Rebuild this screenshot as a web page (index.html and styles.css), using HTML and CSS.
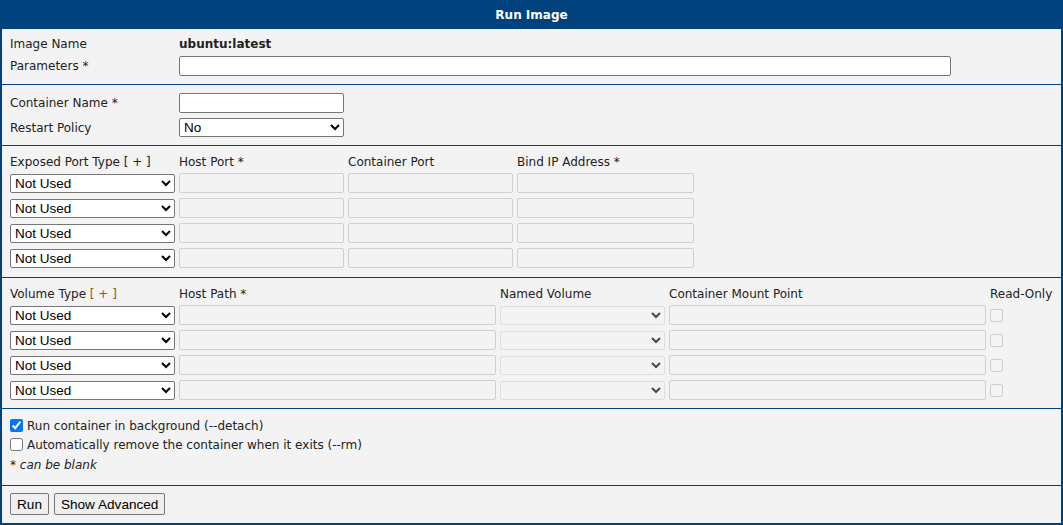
FILE: index.html
```html
<!DOCTYPE html>
<html lang="en">
<head>
  <meta charset="UTF-8" />
  <title>Run Image</title>
  <link rel="stylesheet" href="styles.css">
</head>
<body>
  <div class="panel">
    <div class="panel-title">Run Image</div>

    <section class="section basic">
      <div class="form-row">
        <span class="label">Image Name</span>
        <span class="value">ubuntu:latest</span>
      </div>
      <div class="form-row">
        <label class="label" for="params">Parameters *</label>
        <input type="text" id="params" class="text-input wide">
      </div>
    </section>

    <section class="section names">
      <div class="form-row">
        <label class="label" for="cname">Container Name *</label>
        <input type="text" id="cname" class="text-input">
      </div>
      <div class="form-row">
        <label class="label" for="restart">Restart Policy</label>
        <select id="restart" class="select-input">
          <option selected>No</option>
          <option>Always</option>
          <option>On Failure</option>
          <option>Unless Stopped</option>
        </select>
      </div>
    </section>

    <section class="section ports">
      <div class="grid-head port-grid">
        <span>Exposed Port Type <a class="add">[ + ]</a></span>
        <span>Host Port *</span>
        <span>Container Port</span>
        <span>Bind IP Address *</span>
      </div>
      <div class="grid-rows" id="port-rows"></div>
    </section>

    <section class="section volumes">
      <div class="grid-head volume-grid">
        <span>Volume Type <a class="add link">[ + ]</a></span>
        <span>Host Path *</span>
        <span>Named Volume</span>
        <span>Container Mount Point</span>
        <span>Read-Only</span>
      </div>
      <div class="grid-rows" id="volume-rows"></div>
    </section>

    <section class="section options">
      <label class="check-row"><input type="checkbox" checked> Run container in background (--detach)</label>
      <label class="check-row"><input type="checkbox"> Automatically remove the container when it exits (--rm)</label>
      <div class="note">* can be blank</div>
    </section>

    <section class="section actions">
      <button class="btn">Run</button>
      <button class="btn">Show Advanced</button>
    </section>
  </div>

  <script>
    const portRows = document.querySelector("#port-rows");
    const volumeRows = document.querySelector("#volume-rows");

    function typeSelect(options) {
      return `<select class="select-input">
        <option selected>Not Used</option>
        ${options.map((o) => `<option>${o}</option>`).join("")}
      </select>`;
    }

    for (let i = 0; i < 4; i++) {
      let row = document.createElement("div");
      row.className = "port-grid";
      row.innerHTML = `
        ${typeSelect(["TCP", "UDP"])}
        <input type="text" class="text-input" disabled>
        <input type="text" class="text-input" disabled>
        <input type="text" class="text-input" disabled>
      `;
      portRows.appendChild(row);
    }

    for (let i = 0; i < 4; i++) {
      let row = document.createElement("div");
      row.className = "volume-grid";
      row.innerHTML = `
        ${typeSelect(["Bind", "Volume"])}
        <input type="text" class="text-input" disabled>
        <select class="select-input" disabled><option></option></select>
        <input type="text" class="text-input" disabled>
        <input type="checkbox" class="ro-check" disabled>
      `;
      volumeRows.appendChild(row);
    }
  </script>
</body>
</html>
```

FILE: styles.css
```css
/* Base */
html, body {
  margin: 0;
  height: 100%;
}

body {
  font-family: "DejaVu Sans", Verdana, sans-serif;
  font-size: 12px;
  color: #222;
  background-color: #f3f3f3;
}

/* Panel */
.panel {
  box-sizing: border-box;
  height: 525px;
  border: 2px solid #00427e;
  background-color: #f3f3f3;
}

.panel-title {
  height: 27px;
  line-height: 26px;
  background-color: #00427e;
  color: #fff;
  font-weight: bold;
  text-align: center;
  margin-top: -2px;
  padding-top: 2px;
}

.section {
  padding: 0 8px;
  border-bottom: 1px solid #00427e;
}

.section:last-child {
  border-bottom: none;
}

/* Label / control rows */
.form-row {
  display: grid;
  grid-template-columns: 169px auto;
  align-items: center;
}

.basic {
  padding-top: 6px;
  padding-bottom: 8px;
}

.basic .form-row:first-child {
  height: 18px;
  margin-bottom: 3px;
}

.value {
  font-weight: bold;
}

.names {
  padding-top: 8px;
  padding-bottom: 8px;
}

.names .form-row + .form-row {
  margin-top: 5px;
}

/* Inputs */
.text-input {
  box-sizing: border-box;
  width: 165px;
  height: 20px;
  margin: 0;
  padding: 1px 3px;
  border: 1px solid #767676;
  border-radius: 2px;
  background-color: #fff;
  font-family: "Liberation Sans", Arial, sans-serif;
  font-size: 13px;
}

.text-input.wide {
  width: 772px;
}

.text-input:disabled {
  background-color: #f3f3f3;
  border-color: #d0d0d0;
}

.select-input {
  box-sizing: border-box;
  width: 165px;
  height: 19px;
  margin: 0;
  padding: 0;
  border: 1px solid #767676;
  border-radius: 2px;
  background-color: #fff;
  color: #000;
  font-family: "Liberation Sans", Arial, sans-serif;
  font-size: 13.5px;
}

.select-input:disabled {
  background-color: #f3f3f3;
  border-color: #d6d6d6;
}

/* Port and volume tables */
.ports {
  padding-top: 5px;
  padding-bottom: 9px;
}

.volumes {
  padding-top: 5px;
  padding-bottom: 8px;
}

.grid-head {
  box-sizing: border-box;
  height: 20px;
  padding-top: 2px;
  margin-bottom: 2px;
  align-items: center;
  white-space: nowrap;
}

.grid-rows {
  display: grid;
  row-gap: 5px;
}

.port-grid {
  display: grid;
  grid-template-columns: 165px 165px 165px 177px;
  column-gap: 4px;
  align-items: center;
}

.port-grid .text-input,
.volume-grid .text-input {
  width: 100%;
}

.volume-grid {
  display: grid;
  grid-template-columns: 165px 317px 165px 317px 13px;
  column-gap: 4px;
  align-items: center;
}

.add {
  color: inherit;
}

.add.link {
  color: #9a5a14;
}

.ro-check {
  margin: 0;
  width: 13px;
  height: 13px;
}

/* Options */
.options {
  padding-top: 7px;
  padding-bottom: 9px;
}

.check-row {
  display: flex;
  align-items: center;
  height: 19px;
}

.check-row input {
  margin: 0 4px 0 0;
  width: 13px;
  height: 13px;
}

.note {
  height: 22px;
  line-height: 22px;
  font-style: italic;
}

/* Buttons */
.actions {
  padding-top: 7px;
  display: flex;
  gap: 5px;
}

.btn {
  height: 22px;
  margin: 0;
  padding: 1px 6px;
  font-family: "Liberation Sans", Arial, sans-serif;
  font-size: 13.6px;
  color: #000;
  background-color: #efefef;
  border: 1px solid #767676;
  border-radius: 2px;
}
```
